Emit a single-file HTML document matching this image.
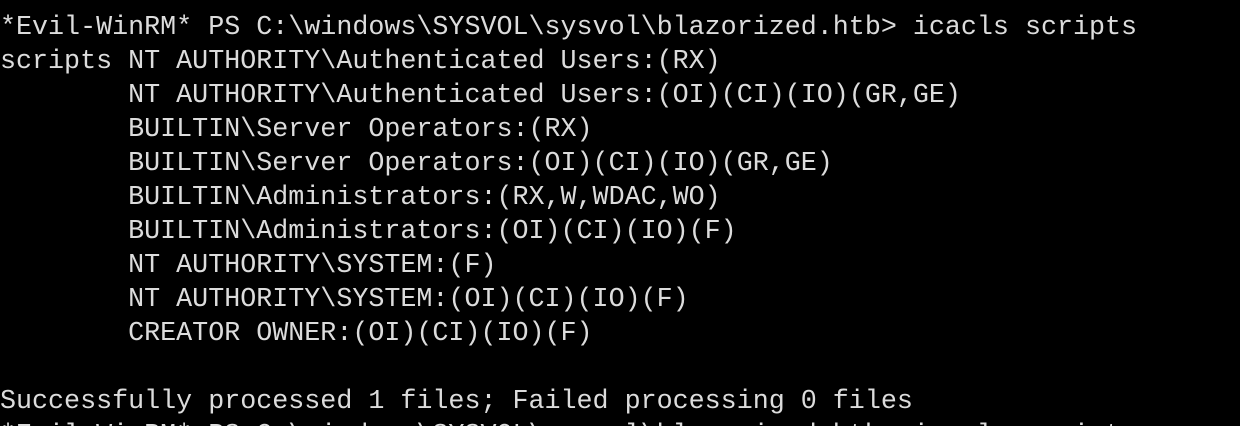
<!DOCTYPE html>
<html><head><style>
html,body{margin:0;padding:0;background:#000;width:1240px;height:426px;overflow:hidden}
pre{margin:0;padding:11px 0 0 0;height:415px;overflow:hidden;font-family:"Liberation Mono","DejaVu Sans Mono",monospace;font-size:26.7px;line-height:34px;color:#dcdcdc;white-space:pre}
</style></head><body><pre>*Evil-WinRM* PS C:\windows\SYSVOL\sysvol\blazorized.htb&gt; icacls scripts
scripts NT AUTHORITY\Authenticated Users:(RX)
        NT AUTHORITY\Authenticated Users:(OI)(CI)(IO)(GR,GE)
        BUILTIN\Server Operators:(RX)
        BUILTIN\Server Operators:(OI)(CI)(IO)(GR,GE)
        BUILTIN\Administrators:(RX,W,WDAC,WO)
        BUILTIN\Administrators:(OI)(CI)(IO)(F)
        NT AUTHORITY\SYSTEM:(F)
        NT AUTHORITY\SYSTEM:(OI)(CI)(IO)(F)
        CREATOR OWNER:(OI)(CI)(IO)(F)

Successfully processed 1 files; Failed processing 0 files
*Evil-WinRM* PS C:\windows\SYSVOL\sysvol\blazorized.htb&gt; icacls scripts</pre></body></html>
